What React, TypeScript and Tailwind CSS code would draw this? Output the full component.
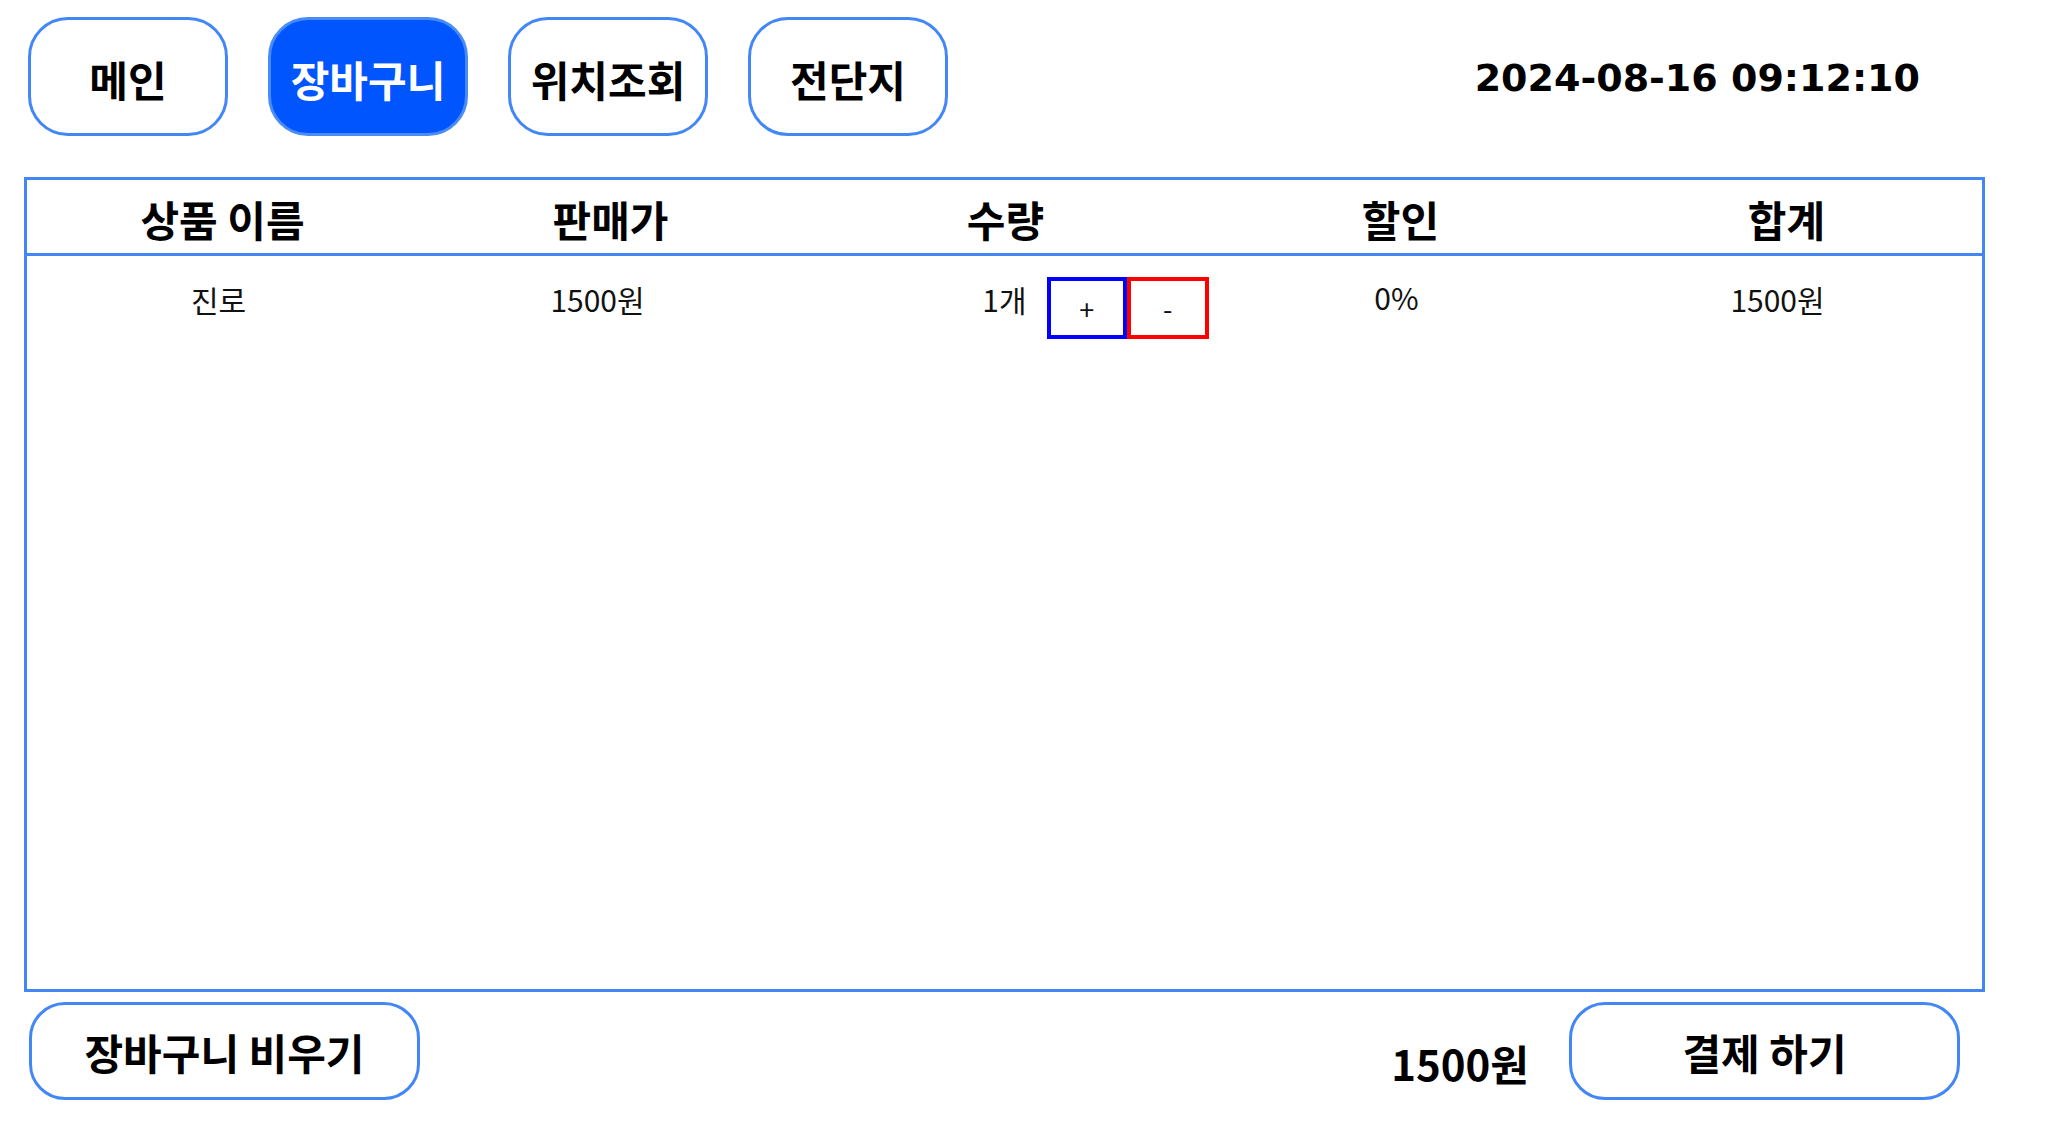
import { useState } from 'react';

const KR = "font-['Noto_Sans_CJK_KR','Noto_Sans',sans-serif]";

const tabs = ['메인', '장바구니', '위치조회', '전단지'];

interface CartItem {
  name: string;
  price: number;
  qty: number;
  discount: number;
}

export default function App() {
  const [active] = useState('장바구니');
  const [items, setItems] = useState<CartItem[]>([{ name: '진로', price: 1500, qty: 1, discount: 0 }]);

  const total = items.reduce((sum, it) => sum + it.price * it.qty, 0);

  const change = (i: number, d: number) =>
    setItems(prev => prev.map((it, idx) => (idx === i ? { ...it, qty: Math.max(0, it.qty + d) } : it)));

  return (
    <div className={`w-[2047px] h-[1134px] bg-white text-black ${KR}`}>
      {/* Top nav */}
      <div className="flex items-center pl-[28px] pr-[127px] pt-[17px]">
        <div className="flex gap-[40px]">
          {tabs.map(t => (
            <button
              key={t}
              className={
                t === active
                  ? 'w-[200px] h-[119px] rounded-[40px] border-[3px] border-[#4a8cf6] bg-[#0055ff] text-white text-[42px] font-bold pt-[3px]'
                  : 'w-[200px] h-[119px] rounded-[40px] border-[3px] border-[#4287f5] bg-white text-black text-[42px] font-bold pt-[3px]'
              }
            >
              {t}
            </button>
          ))}
        </div>
        <div className="ml-auto pt-[2px] font-['DejaVu_Sans',sans-serif] font-bold text-[38px] leading-none">
          2024-08-16 09:12:10
        </div>
      </div>

      {/* Cart table */}
      <div className="ml-[24px] mt-[41px] w-[1961px] h-[815px] border-[3px] border-[#4287f5] flex flex-col">
        <div className="grid grid-cols-5 h-[76px] border-b-[3px] border-[#4287f5] items-center text-[42px] font-bold pt-[3px]">
          <div className="text-center">상품 이름</div>
          <div className="text-center pr-[6px]">판매가</div>
          <div className="text-center pl-[2px]">수량</div>
          <div className="text-center pl-[10px]">할인</div>
          <div className="text-center">합계</div>
        </div>

        {items.map((it, i) => (
          <div key={i} className="grid grid-cols-5 pt-[21px] text-[30px] text-[#111] leading-[40px]">
            <div className="text-center pt-[2px] pr-[8px]">{it.name}</div>
            <div className="text-center pt-[2px] pr-[32px]">{it.price}원</div>
            <div className="grid grid-cols-[minmax(0,1fr)_auto_minmax(0,1fr)] items-start">
              <div />
              <div className="pt-[2px]">{it.qty}개</div>
              <div className="flex ml-[20px]">
                <button
                  onClick={() => change(i, 1)}
                  className="shrink-0 w-[80px] h-[62px] border-[4px] border-[#0000ff] text-[27px] leading-none"
                >
                  +
                </button>
                <button
                  onClick={() => change(i, -1)}
                  className="shrink-0 w-[82px] h-[62px] border-[4px] border-[#ff0000] text-[27px] leading-none"
                >
                  -
                </button>
              </div>
            </div>
            <div className="text-center pl-[2px]">{it.discount}%</div>
            <div className="text-center pr-[18px] pt-[2px]">{it.price * it.qty}원</div>
          </div>
        ))}
      </div>

      {/* Bottom actions */}
      <div className="flex items-center mt-[10px] pl-[29px] pr-[87px]">
        <button className="w-[391px] h-[98px] rounded-[36px] border-[3px] border-[#4287f5] text-[42px] font-bold">
          장바구니 비우기
        </button>
        <div className="ml-auto mr-[40px] mt-[22px] text-[42px] font-bold">{total}원</div>
        <button className="w-[391px] h-[98px] rounded-[36px] border-[3px] border-[#4287f5] text-[42px] font-bold">
          결제 하기
        </button>
      </div>
    </div>
  );
}
